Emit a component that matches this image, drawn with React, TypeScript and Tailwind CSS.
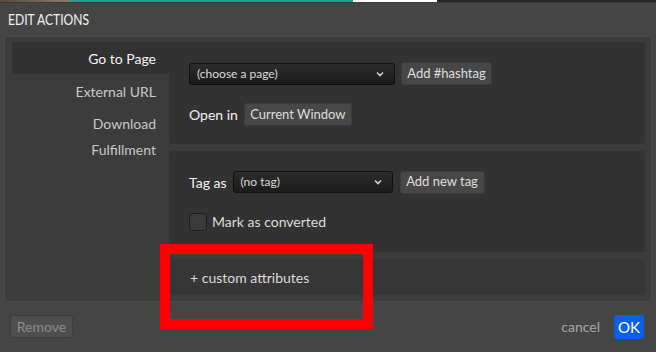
import React from "react";

const Chevron = () => (
  <svg width="8" height="6" viewBox="0 0 8 6" className="shrink-0">
    <path d="M1 1.5 L4 4.5 L7 1.5" stroke="#d0d0d0" strokeWidth="1.6" fill="none" />
  </svg>
);

function Select({ label, w }: { label: string; w: string }) {
  return (
    <div
      className={`${w} h-[22px] flex items-center justify-between pl-[7px] pr-[10px] rounded-[3px] border border-[#101010] bg-gradient-to-b from-[#2c2c2c] to-[#1b1b1b] text-[12px] text-[#dcdcdc]`}
    >
      <span>{label}</span>
      <Chevron />
    </div>
  );
}

function Btn({ children, w }: { children: React.ReactNode; w: string }) {
  return (
    <div
      className={`${w} h-[23px] flex items-center justify-center rounded-[3px] bg-[#474747] border border-[#3c3c3c] text-[13px] text-[#dedede]`}
    >
      {children}
    </div>
  );
}

export default function App() {
  return (
    <div
      className="relative w-[656px] h-[352px] overflow-hidden bg-[#454545] flex flex-col"
      style={{ fontFamily: "Lato, 'Liberation Sans', sans-serif" }}
    >
      {/* top strip */}
      <div className="flex h-[2px] shrink-0">
        <div className="w-[70px] bg-gradient-to-r from-[#5a4a42] to-[#8a7a70]" />
        <div className="w-[283px] bg-[#14a58c]" />
        <div className="w-[84px] bg-white" />
        <div className="flex-1 bg-[#262626]" />
      </div>
      <div className="h-[1px] bg-[#3a3a3a] shrink-0" />

      {/* title */}
      <div className="h-[33px] shrink-0 pl-[8px] pt-[7px]">
        <div className="origin-left scale-x-[0.78] text-[15.5px] leading-[18px] text-[#f2f2f2]">
          EDIT ACTIONS
        </div>
      </div>

      {/* main panel */}
      <div className="mx-[4px] h-[266px] shrink-0 rounded-[3px] border border-[#4a4a4a] bg-[#3c3c3c] pt-[5px] pl-[7px] pr-[6px] flex">
        {/* nav */}
        <div className="w-[157px] shrink-0 flex flex-col text-[14px] text-[#c8c8c8]">
          <div className="h-[32px] rounded-l-[3px] bg-[#323232] flex items-center justify-end pr-[13px] text-[#f4f4f4]">
            Go to Page
          </div>
          <div className="h-[34px] flex items-center justify-end pr-[13px]">External URL</div>
          <div className="pr-[13px] pt-[3px] text-right leading-[26px]">
            Download
            <br />
            Fulfillment
          </div>
        </div>

        {/* cards */}
        <div className="flex-1 flex flex-col gap-[7px]">
          <div className="h-[102px] rounded-r-[3px] rounded-bl-[3px] bg-[#323232] pl-[20px] pt-[20px] flex flex-col gap-[18px]">
            <div className="flex items-center gap-[6px] h-[23px]">
              <Select label="(choose a page)" w="w-[206px]" />
              <Btn w="w-[91px]">Add #hashtag</Btn>
            </div>
            <div className="flex items-center gap-[6px] h-[23px]">
              <span className="text-[14px] text-[#f2f2f2]">Open in</span>
              <Btn w="w-[108px]">Current Window</Btn>
            </div>
          </div>

          <div className="h-[101px] rounded-[3px] bg-[#323232] pl-[20px] pt-[19px] flex flex-col gap-[17px]">
            <div className="flex items-center h-[24px]">
              <span className="text-[14px] text-[#f2f2f2] mr-[6px]">Tag as</span>
              <Select label="(no tag)" w="w-[160px]" />
              <div className="ml-[7px]">
                <Btn w="w-[85px]">Add new tag</Btn>
              </div>
            </div>
            <div className="flex items-center gap-[5px]">
              <div className="w-[18px] h-[18px] rounded-[3px] border border-[#1c1c1c] bg-[#3a3a3a]" />
              <span className="text-[14px] text-[#dcdcdc]">Mark as converted</span>
            </div>
          </div>

          <div className="h-[36px] rounded-[3px] bg-[#363636] pl-[21px] flex items-center text-[14px] text-[#dcdcdc]">
            + custom attributes
          </div>
        </div>
      </div>

      {/* footer */}
      <div className="flex-1 flex items-start pt-[13px] pl-[10px] pr-[12px]">
        <div className="w-[63px] h-[23px] rounded-[3px] bg-[#4e4e4e] border border-[#3d3d3d] flex items-center justify-center text-[14px] text-[#8c8c8c]">
          Remove
        </div>
        <div className="flex-1" />
        <span className="mt-[2px] text-[14px] leading-[20px] text-[#a8a8a8] mr-[14px]">cancel</span>
        <div className="w-[30px] h-[24px] rounded-[3px] bg-[#0a5fe8] flex items-center justify-center text-[15px] text-white">
          OK
        </div>
      </div>

      {/* red annotation */}
      <div className="absolute left-[160px] top-[244px] w-[213px] h-[85px] border-[10px] border-[#ff0000]" />
    </div>
  );
}
